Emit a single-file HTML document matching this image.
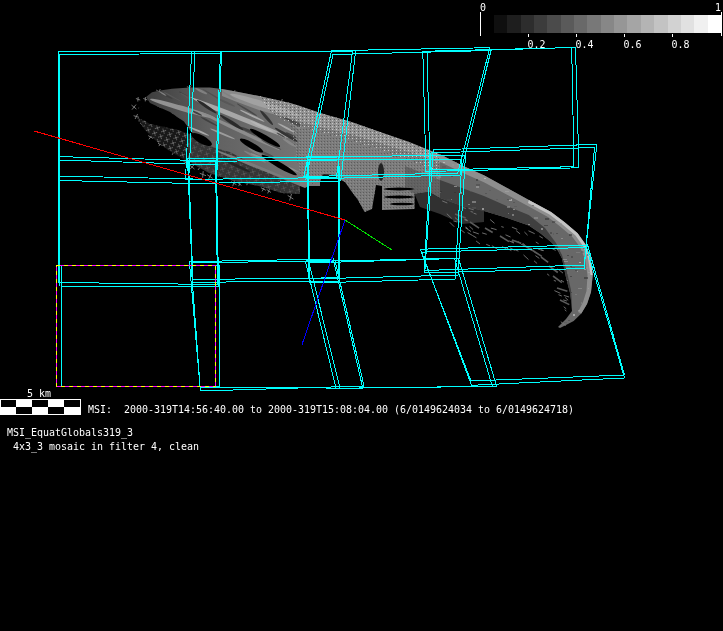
<!DOCTYPE html>
<html><head><meta charset="utf-8"><title>MSI mosaic</title>
<style>html,body{margin:0;padding:0;background:#000;overflow:hidden}svg{display:block}text{font-family:"DejaVu Sans Mono","Liberation Mono",monospace;fill:#fff;font-size:10.5px}</style></head><body>
<svg width="723" height="631" viewBox="0 0 723 631">
<rect width="723" height="631" fill="#000"/>
<defs>
<filter id="gs" x="0" y="0" width="723" height="631" filterUnits="userSpaceOnUse" color-interpolation-filters="sRGB"><feColorMatrix type="saturate" values="0"/></filter>
<pattern id="mesh" width="9" height="8" patternUnits="userSpaceOnUse" patternTransform="rotate(25)">
<path d="M1 1L5 5M5 1L1 5" stroke="#8a8a8a" stroke-width="0.7" fill="none"/>
</pattern>
<pattern id="mesh2" width="7" height="6" patternUnits="userSpaceOnUse" patternTransform="rotate(28)">
<rect width="7" height="6" fill="#181818"/>
<path d="M1 1L5 5M5 1L1 5" stroke="#707070" stroke-width="0.9" fill="none"/>
</pattern>
<pattern id="dots" width="3" height="3" patternUnits="userSpaceOnUse">
<rect width="3" height="3" fill="#777"/><rect x="0" y="0" width="1" height="1" fill="#b8b8b8"/><rect x="2" y="1" width="1" height="1" fill="#555"/>
</pattern>
<pattern id="sparse" width="13" height="11" patternUnits="userSpaceOnUse" patternTransform="rotate(20)">
<path d="M1 2L5 3M8 7L11 8" stroke="#777" stroke-width="0.8" fill="none"/>
</pattern>
<linearGradient id="bodyg" gradientUnits="userSpaceOnUse" x1="145" y1="0" x2="330" y2="0"><stop offset="0" stop-color="#3c3c3c"/><stop offset="0.35" stop-color="#606060"/><stop offset="1" stop-color="#7c7c7c"/></linearGradient>
<pattern id="dd" width="3" height="3" patternUnits="userSpaceOnUse"><rect x="0" y="0" width="1" height="1" fill="#5c5c5c"/><rect x="2" y="1" width="1" height="1" fill="#8c8c8c"/></pattern>
<pattern id="wd" width="4" height="3" patternUnits="userSpaceOnUse"><rect x="0" y="0" width="1" height="1" fill="#c8c8c8"/><rect x="2" y="2" width="1" height="1" fill="#5a5a5a"/></pattern>
</defs>
<path d="M186.9 86.6L192.1 89.0M191.1 85.4L187.9 90.2M156.2 90.0L161.2 93.3M160.3 89.1L157.1 94.2M166.1 91.2L171.4 94.3M170.1 90.1L167.4 95.5M172.6 93.4L178.5 96.4M177.1 91.9L174.1 97.8M180.2 92.4L184.8 96.2M184.6 92.2L180.4 96.4M189.0 92.2L194.8 93.8M192.4 90.1L191.4 96.0M198.0 90.7L201.8 93.2M200.6 89.8L199.2 94.1M205.6 92.1L211.8 94.0M209.3 89.9L208.1 96.3M215.9 93.1L221.0 96.9M219.8 92.1L217.1 97.9M223.9 90.9L228.9 95.0M227.7 89.9L225.1 95.9M231.7 91.3L236.2 93.6M235.0 90.2L232.9 94.7M135.9 98.5L140.2 100.0M138.2 97.0L137.8 101.5M143.3 98.5L147.4 99.9M145.4 97.0L145.3 101.4M151.2 97.5L156.8 100.7M154.8 96.0L153.1 102.2M159.5 99.6L164.5 101.2M163.1 98.0L161.0 102.8M170.8 100.0L176.1 101.7M173.5 98.1L173.5 103.6M176.4 99.0L182.4 101.1M179.4 96.9L179.4 103.3M188.2 100.0L192.4 102.2M190.7 98.8L189.9 103.5M194.4 101.2L199.8 104.6M198.2 99.9L196.0 106.0M202.2 98.2L207.7 101.2M206.6 97.0L203.3 102.3M210.9 97.9L215.8 101.9M215.6 97.7L211.1 102.1M220.8 101.2L226.6 103.4M224.6 99.3L222.9 105.2M228.4 98.3L232.5 100.0M230.8 96.9L230.0 101.3M238.1 101.1L242.4 104.5M242.3 101.0L238.2 104.7M247.5 99.6L252.1 101.3M250.1 98.0L249.5 102.9M252.7 99.6L258.0 103.4M257.0 98.7L253.7 104.3M263.6 101.0L267.6 103.4M267.1 100.4L264.2 104.0M272.0 101.1L277.2 102.9M275.7 99.5L273.5 104.6M278.3 100.8L284.4 103.6M282.3 99.0L280.3 105.4M131.5 105.1L136.4 109.1M136.0 104.6L132.0 109.6M138.4 108.1L142.9 109.3M141.6 106.5L139.7 110.8M147.4 107.2L153.3 110.1M152.1 105.8L148.6 111.4M157.2 106.4L161.9 108.3M160.0 104.9L159.1 109.8M164.5 106.7L169.7 108.4M168.3 105.1L165.9 110.0M172.4 106.6L177.0 110.1M176.1 105.8L173.2 110.8M182.9 107.2L187.9 109.8M185.8 105.7L185.0 111.3M190.2 106.0L193.8 108.5M192.8 105.2L191.3 109.3M198.0 108.3L203.3 110.5M201.6 106.7L199.7 112.1M207.4 108.5L211.5 110.8M210.1 107.4L208.8 111.9M214.4 108.2L219.3 111.0M218.3 107.2L215.4 112.0M225.3 106.9L230.5 109.6M229.0 105.6L226.8 111.0M233.0 107.0L238.1 109.6M237.2 106.0L233.9 110.6M240.9 108.8L247.1 111.2M245.1 106.8L243.0 113.2M251.3 109.1L255.8 110.6M254.0 107.5L253.1 112.2M256.6 106.3L260.5 108.7M259.9 105.6L257.2 109.3M267.7 105.5L272.9 108.7M271.2 104.2L269.5 110.1M276.9 108.8L280.7 111.9M280.0 108.3L277.5 112.5M282.7 109.4L288.7 111.5M286.4 107.3L285.0 113.6M292.1 106.9L296.6 108.8M295.3 105.6L293.3 110.1M133.6 115.7L139.0 117.3M137.6 114.0L135.1 119.0M144.5 117.0L148.8 118.7M146.8 115.6L146.5 120.2M153.0 114.1L157.2 116.1M156.4 113.1L153.8 117.1M161.9 113.6L165.7 116.5M165.1 113.1L162.4 117.0M169.9 113.1L173.7 115.6M172.8 112.3L170.8 116.4M175.4 116.1L180.2 119.5M178.7 114.9L176.9 120.6M186.5 112.8L192.3 115.7M190.3 111.2L188.5 117.4M194.3 116.9L199.1 118.5M197.3 115.3L196.1 120.2M201.7 113.8L206.3 115.1M204.1 112.0L203.9 116.8M209.9 114.0L215.6 116.4M213.7 112.2L211.8 118.2M218.6 114.6L222.8 116.2M220.8 113.2L220.6 117.6M229.3 115.1L233.6 117.3M232.8 114.2L230.0 118.2M235.0 116.0L239.8 118.5M238.9 115.0L236.0 119.6M244.7 114.1L249.4 118.0M248.6 113.4L245.6 118.7M254.6 115.6L260.0 118.1M258.1 114.0L256.5 119.7M260.8 113.3L264.6 115.8M263.5 112.4L261.9 116.6M269.1 112.4L274.2 116.3M273.6 111.8L269.7 116.9M278.3 113.8L282.9 116.1M281.1 112.5L280.1 117.5M287.2 112.9L292.4 117.2M291.7 112.3L287.8 117.8M295.1 116.8L299.8 118.9M297.7 115.3L297.3 120.4M138.4 120.8L143.2 122.3M141.2 119.0L140.4 124.0M145.0 120.7L149.8 122.5M148.2 119.2L146.6 124.0M155.4 122.9L160.4 126.1M159.8 122.2L156.0 126.8M162.6 121.7L169.0 123.9M167.0 119.6L164.6 126.0M172.8 119.7L177.9 123.6M177.2 119.1L173.4 124.3M182.1 123.6L186.3 125.9M185.1 122.6L183.3 126.9M190.3 123.1L195.9 126.3M195.0 122.1L191.2 127.3M198.6 123.6L203.4 124.9M201.0 121.8L201.0 126.7M205.4 120.4L211.0 123.5M209.7 119.1L206.7 124.8M215.1 123.5L220.4 124.9M218.7 121.6L216.8 126.9M224.3 122.0L229.2 125.0M227.4 120.7L226.1 126.3M233.1 121.7L237.3 123.4M236.1 120.4L234.3 124.6M238.6 122.9L244.6 126.0M242.7 121.3L240.5 127.6M248.5 122.7L253.9 125.8M252.7 121.5L249.6 126.9M256.0 120.7L260.1 123.5M259.0 119.8L257.1 124.4M266.4 120.7L270.6 122.4M269.4 119.4L267.7 123.7M275.3 123.0L279.8 125.4M278.5 121.8L276.6 126.6M282.0 120.9L288.2 123.1M286.7 119.1L283.5 124.8M293.3 120.0L297.7 123.2M297.4 119.6L293.6 123.5M152.5 128.0L158.1 131.0M157.1 126.9L153.5 132.2M159.9 128.4L165.7 131.4M163.3 126.7L162.4 133.2M166.0 129.9L171.0 132.0M168.8 128.2L168.2 133.7M175.3 129.4L181.5 131.1M179.3 127.2L177.4 133.3M186.1 127.7L191.6 131.3M191.0 126.9L186.7 132.0M193.1 128.8L197.2 132.2M196.8 128.4L193.5 132.6M201.5 130.0L206.4 131.4M203.9 128.2L204.0 133.2M211.2 128.9L217.4 131.3M214.9 126.9L213.8 133.4M219.5 128.1L223.6 131.4M223.4 127.9L219.7 131.6M228.7 129.5L233.8 133.6M233.1 128.8L229.4 134.2M236.6 127.8L242.1 130.6M240.9 126.5L237.9 131.9M245.8 128.7L249.4 131.5M248.4 128.1L246.7 132.2M253.3 129.0L257.5 131.8M257.1 128.5L253.7 132.3M260.8 130.4L265.3 132.9M263.9 129.2L262.1 134.0M269.2 128.2L273.1 131.1M272.5 127.6L269.9 131.7M276.8 131.1L282.9 134.1M280.5 129.3L279.3 136.0M285.8 128.6L290.8 130.1M288.5 126.8L288.1 132.0M294.3 129.5L299.7 133.1M298.5 128.3L295.6 134.2M148.2 135.6L153.0 138.4M152.3 134.8L148.9 139.3M153.8 136.5L158.4 138.6M156.9 135.2L155.3 140.0M164.4 139.0L170.7 140.8M167.4 136.7L167.8 143.1M172.7 138.7L177.5 141.5M175.6 137.4L174.6 142.8M179.7 138.3L184.9 142.1M184.6 138.0L180.0 142.4M188.1 135.8L192.3 138.1M191.4 134.8L189.1 139.0M199.1 137.7L204.0 141.1M202.9 136.8L200.1 142.0M205.5 135.5L211.4 137.8M209.9 133.9L207.0 139.4M215.1 136.9L219.5 138.6M218.2 135.5L216.5 139.9M224.0 135.9L228.1 138.0M227.0 134.9L225.1 139.0M230.5 136.6L236.1 138.2M233.5 134.5L233.1 140.3M239.7 138.5L244.5 142.1M243.6 137.8L240.5 142.9M246.9 135.7L252.5 139.3M250.9 134.4L248.4 140.6M254.6 137.2L260.1 139.8M258.0 135.6L256.6 141.4M266.0 139.5L270.8 140.9M268.7 137.7L268.2 142.7M273.9 137.8L277.9 140.6M277.4 137.3L274.5 141.2M281.7 136.0L287.9 138.6M286.3 134.3L283.2 140.3M289.3 136.2L295.1 138.6M293.8 134.7L290.6 140.1M158.0 143.3L162.1 145.2M161.3 142.3L158.9 146.1M168.9 144.8L174.2 149.0M173.1 143.9L169.9 149.9M174.3 146.9L180.2 148.6M178.1 144.8L176.4 150.7M184.1 144.6L189.0 146.4M186.5 142.9L186.5 148.1M191.4 144.4L197.8 146.4M196.1 142.4L193.1 148.4M200.2 143.6L205.4 147.3M204.4 142.6L201.3 148.2M208.6 144.3L212.8 147.5M211.8 143.5L209.6 148.3M218.4 146.6L222.5 148.5M221.6 145.6L219.4 149.5M228.4 143.5L232.7 144.8M231.5 142.1L229.6 146.2M234.0 145.7L240.0 148.3M237.7 143.8L236.4 150.2M246.2 145.1L250.4 147.8M249.3 144.1L247.4 148.8M251.7 142.1L256.6 145.9M256.0 141.5L252.2 146.5M263.1 143.0L267.5 145.2M266.7 142.1L263.8 146.1M271.6 144.5L276.1 146.6M274.7 143.2L272.9 147.9M279.6 143.0L284.9 146.5M284.2 142.2L280.3 147.2M287.7 145.4L292.5 147.4M290.7 143.9L289.5 148.9M296.6 143.0L300.7 145.7M299.5 142.0L297.7 146.6M171.2 151.1L175.9 153.8M174.9 150.1L172.2 154.8M180.4 154.0L186.1 155.8M184.4 152.1L182.1 157.6M187.7 152.3L192.1 155.2M190.8 151.3L189.0 156.3M196.3 151.0L200.1 153.9M199.6 150.5L196.9 154.4M204.1 151.5L210.1 154.7M207.9 149.8L206.2 156.4M214.3 153.1L220.7 155.1M218.2 150.8L216.8 157.4M222.9 154.0L229.2 155.8M226.3 151.6L225.7 158.1M228.8 150.6L234.7 153.9M233.8 149.6L229.7 154.9M238.7 154.0L243.8 156.0M242.4 152.5L240.1 157.5M249.5 150.4L254.5 153.4M252.9 149.1L251.2 154.7M255.9 151.2L260.5 153.0M259.0 149.8L257.4 154.4M265.8 151.4L269.9 153.2M268.7 150.3L267.0 154.3M272.5 151.4L276.5 154.1M275.8 150.7L273.2 154.8M280.2 150.6L284.8 153.2M283.8 149.5L281.3 154.3M288.4 150.9L293.9 153.4M291.8 149.2L290.4 155.1M183.5 161.6L188.7 163.4M186.1 159.8L186.1 165.3M192.1 160.6L198.4 162.5M196.1 158.4L194.3 164.7M200.8 160.1L205.2 161.9M203.7 158.8L202.3 163.3M211.4 157.8L216.0 161.0M215.6 157.4L211.8 161.4M216.7 157.4L221.9 161.6M221.1 156.7L217.4 162.3M225.1 161.1L229.3 164.3M228.8 160.6L225.6 164.9M235.9 158.5L241.7 160.7M239.5 156.6L238.1 162.7M245.1 161.5L249.7 163.2M247.9 160.0L246.9 164.7M252.4 159.7L256.8 161.4M255.5 158.4L253.7 162.7M262.2 157.6L267.0 160.8M265.3 156.4L263.8 161.9M270.3 158.1L275.4 160.9M274.2 156.9L271.5 162.1M276.6 159.4L281.8 161.9M280.5 158.1L278.0 163.3M286.4 159.6L290.2 161.9M289.2 158.7L287.3 162.8M293.1 160.7L298.7 163.5M296.6 159.0L295.3 165.1M189.6 165.0L194.5 169.1M194.2 164.6L189.9 169.4M197.0 165.7L203.0 168.8M202.0 164.5L198.0 170.0M206.4 165.2L211.4 169.1M210.0 164.2L207.8 170.1M213.3 168.1L217.1 171.0M216.2 167.4L214.1 171.7M223.3 165.3L227.7 168.8M226.7 164.5L224.4 169.6M229.3 167.8L234.3 169.2M231.9 165.9L231.7 171.1M237.5 168.4L242.3 172.1M241.0 167.5L238.7 173.0M248.5 165.5L253.3 168.4M251.9 164.3L249.8 169.6M257.4 167.0L262.1 170.5M260.7 166.0L258.7 171.4M266.5 167.5L270.9 170.6M269.8 166.6L267.7 171.5M275.0 167.3L279.4 170.3M278.4 166.5L276.0 171.1M280.6 168.2L284.3 170.8M283.3 167.4L281.6 171.6M290.3 168.9L295.3 172.0M293.8 167.7L291.8 173.1M199.8 173.3L206.0 175.7M203.2 171.2L202.6 177.8M207.2 174.7L212.6 178.4M211.3 173.7L208.4 179.5M216.5 172.6L221.7 175.5M220.1 171.2L218.1 176.8M226.3 173.9L231.9 177.6M230.3 172.7L227.9 178.9M236.0 173.0L241.2 175.4M239.2 171.4L238.0 176.9M241.8 176.0L245.7 178.2M245.1 175.3L242.4 178.9M250.0 173.4L255.2 176.2M253.9 172.2L251.2 177.4M261.4 173.7L266.1 175.7M263.9 172.1L263.6 177.3M269.6 176.3L275.5 177.9M273.6 174.3L271.5 180.0M277.7 174.5L283.3 177.2M281.2 172.9L279.8 178.9M284.4 174.0L288.5 175.8M287.4 172.9L285.4 177.0M294.4 176.3L300.1 178.5M298.2 174.5L296.3 180.3M231.0 181.7L236.4 184.7M234.7 180.3L232.7 186.2M237.8 182.6L241.4 185.4M240.5 181.9L238.7 186.1M244.3 180.6L250.4 183.3M247.8 178.6L246.9 185.2M253.3 180.1L258.5 183.2M257.5 179.1L254.3 184.2M264.5 180.6L269.9 183.0M268.6 179.2L265.8 184.3M274.2 183.7L277.9 186.4M277.6 183.4L274.4 186.7M282.7 181.2L287.4 182.7M285.0 179.5L285.1 184.4M290.7 183.0L295.5 186.5M294.8 182.3L291.5 187.2M260.9 187.7L265.9 190.3M264.9 186.6L262.0 191.4M266.6 189.4L270.9 192.5M269.8 188.6L267.7 193.4M278.2 188.8L282.3 191.5M281.4 188.0L279.1 192.3M283.6 190.2L287.3 192.9M286.8 189.7L284.1 193.4M294.3 190.4L299.0 192.6M297.4 189.0L295.9 194.0M287.7 195.4L293.4 199.1M291.5 194.0L289.6 200.5" stroke="#909090" stroke-width="0.8" fill="none"/>
<polygon points="137.0,118.0 150.0,122.0 165.0,126.0 178.0,130.0 190.0,133.0 200.0,140.0 230.0,150.0 262.0,165.0 300.0,180.0 300.0,194.0 282.0,193.0 259.0,186.0 234.0,181.0 209.0,173.0 185.0,160.0 168.0,150.0 155.0,140.0 145.0,130.0" fill="url(#mesh2)" />
<polygon points="186.0,132.0 200.0,140.0 230.0,150.0 262.0,165.0 300.0,180.0 300.0,194.0 282.0,193.0 259.0,186.0 234.0,181.0 209.0,173.0 190.0,162.0" fill="#4a4a4a" opacity="0.6"/>
<polygon points="140.0,107.0 146.0,103.0 156.5,106.0 170.0,112.0 184.0,121.5 190.0,130.0 193.0,135.0 178.0,130.0 165.0,127.0 150.0,124.0 142.0,119.0 136.0,112.0" fill="#000" />
<polygon points="146.0,97.0 152.0,92.3 160.0,90.5 172.0,88.7 190.0,87.5 209.6,87.5 222.0,89.0 234.5,91.2 259.0,96.0 290.0,103.0 300.0,106.0 320.0,113.0 320.0,186.0 300.0,186.0 280.0,178.0 262.0,170.0 245.0,160.0 230.0,152.0 215.0,148.0 200.0,142.0 190.0,130.0 184.0,121.5 170.0,112.0 156.5,106.0 150.0,103.0" fill="url(#bodyg)" />
<ellipse cx="182.5" cy="108.5" rx="33.9" ry="2.5" transform="rotate(16.3 182.5 108.5)" fill="#929292"/>
<ellipse cx="237.5" cy="117.0" rx="56.5" ry="2.5" transform="rotate(21.8 237.5 117.0)" fill="#a8a8a8"/>
<ellipse cx="240.0" cy="131.0" rx="44.3" ry="1.75" transform="rotate(25.4 240.0 131.0)" fill="#8c8c8c"/>
<ellipse cx="265.0" cy="105.0" rx="36.7" ry="3.0" transform="rotate(17.4 265.0 105.0)" fill="#a0a0a0"/>
<ellipse cx="252.5" cy="165.0" rx="40.4" ry="1.5" transform="rotate(21.8 252.5 165.0)" fill="#7a7a7a"/>
<clipPath id="cl"><polygon points="146.0,97.0 152.0,92.3 160.0,90.5 172.0,88.7 190.0,87.5 209.6,87.5 222.0,89.0 234.5,91.2 259.0,96.0 290.0,103.0 300.0,106.0 320.0,113.0 320.0,186.0 300.0,186.0 280.0,178.0 262.0,170.0 245.0,160.0 230.0,152.0 215.0,148.0 200.0,142.0 190.0,130.0 184.0,121.5 170.0,112.0 156.5,106.0 150.0,103.0"/></clipPath>
<g clip-path="url(#cl)">
<ellipse cx="221.9" cy="189.2" rx="11.9" ry="0.8" transform="rotate(29.4 221.9 189.2)" fill="rgb(168,168,168)"/>
<ellipse cx="173.3" cy="179.9" rx="6.8" ry="0.6" transform="rotate(30.9 173.3 179.9)" fill="rgb(180,180,180)"/>
<ellipse cx="223.6" cy="169.7" rx="11.0" ry="0.9" transform="rotate(27.1 223.6 169.7)" fill="rgb(144,144,144)"/>
<ellipse cx="179.7" cy="150.6" rx="8.0" ry="1.1" transform="rotate(29.4 179.7 150.6)" fill="rgb(168,168,168)"/>
<ellipse cx="254.9" cy="156.8" rx="12.5" ry="1.2" transform="rotate(28.5 254.9 156.8)" fill="rgb(128,128,128)"/>
<ellipse cx="266.4" cy="153.8" rx="8.6" ry="1.25" transform="rotate(25.2 266.4 153.8)" fill="rgb(80,80,80)"/>
<ellipse cx="199.0" cy="131.2" rx="11.1" ry="0.95" transform="rotate(23.6 199.0 131.2)" fill="rgb(168,168,168)"/>
<ellipse cx="161.2" cy="175.7" rx="9.2" ry="1.25" transform="rotate(28.5 161.2 175.7)" fill="rgb(88,88,88)"/>
<ellipse cx="213.1" cy="95.4" rx="12.3" ry="0.65" transform="rotate(31.2 213.1 95.4)" fill="rgb(80,80,80)"/>
<ellipse cx="247.0" cy="109.8" rx="11.8" ry="0.85" transform="rotate(31.3 247.0 109.8)" fill="rgb(72,72,72)"/>
<ellipse cx="290.9" cy="135.1" rx="6.1" ry="1.05" transform="rotate(27.0 290.9 135.1)" fill="rgb(64,64,64)"/>
<ellipse cx="289.6" cy="142.8" rx="8.1" ry="1.3" transform="rotate(31.4 289.6 142.8)" fill="rgb(136,136,136)"/>
<ellipse cx="191.1" cy="144.4" rx="13.4" ry="0.85" transform="rotate(29.3 191.1 144.4)" fill="rgb(128,128,128)"/>
<ellipse cx="166.5" cy="117.6" rx="8.0" ry="1.25" transform="rotate(22.1 166.5 117.6)" fill="rgb(168,168,168)"/>
<ellipse cx="259.6" cy="157.3" rx="9.8" ry="1.1" transform="rotate(23.2 259.6 157.3)" fill="rgb(144,144,144)"/>
<ellipse cx="305.8" cy="142.2" rx="6.2" ry="0.9" transform="rotate(30.1 305.8 142.2)" fill="rgb(168,168,168)"/>
<ellipse cx="180.4" cy="180.5" rx="4.7" ry="0.95" transform="rotate(29.6 180.4 180.5)" fill="rgb(136,136,136)"/>
<ellipse cx="252.2" cy="115.8" rx="13.6" ry="0.95" transform="rotate(25.6 252.2 115.8)" fill="rgb(168,168,168)"/>
<ellipse cx="201.6" cy="143.8" rx="5.3" ry="1.15" transform="rotate(30.2 201.6 143.8)" fill="rgb(156,156,156)"/>
<ellipse cx="196.2" cy="162.1" rx="10.9" ry="0.95" transform="rotate(31.9 196.2 162.1)" fill="rgb(88,88,88)"/>
<ellipse cx="285.5" cy="169.1" rx="7.6" ry="0.95" transform="rotate(28.4 285.5 169.1)" fill="rgb(156,156,156)"/>
<ellipse cx="228.1" cy="154.4" rx="10.6" ry="1.2" transform="rotate(25.7 228.1 154.4)" fill="rgb(144,144,144)"/>
<ellipse cx="170.4" cy="174.8" rx="13.1" ry="0.95" transform="rotate(29.8 170.4 174.8)" fill="rgb(88,88,88)"/>
<ellipse cx="214.8" cy="148.8" rx="10.6" ry="1.05" transform="rotate(24.0 214.8 148.8)" fill="rgb(80,80,80)"/>
<ellipse cx="194.9" cy="100.0" rx="5.4" ry="0.85" transform="rotate(24.4 194.9 100.0)" fill="rgb(180,180,180)"/>
<ellipse cx="185.4" cy="180.5" rx="12.0" ry="1.3" transform="rotate(23.7 185.4 180.5)" fill="rgb(128,128,128)"/>
<ellipse cx="172.8" cy="180.0" rx="9.5" ry="0.75" transform="rotate(28.3 172.8 180.0)" fill="rgb(144,144,144)"/>
<ellipse cx="271.1" cy="144.6" rx="11.4" ry="1.0" transform="rotate(26.2 271.1 144.6)" fill="rgb(80,80,80)"/>
<ellipse cx="197.1" cy="113.2" rx="5.4" ry="0.95" transform="rotate(27.0 197.1 113.2)" fill="rgb(64,64,64)"/>
<ellipse cx="300.8" cy="158.5" rx="6.4" ry="1.2" transform="rotate(23.8 300.8 158.5)" fill="rgb(128,128,128)"/>
<ellipse cx="158.8" cy="173.6" rx="8.6" ry="1.2" transform="rotate(27.6 158.8 173.6)" fill="rgb(144,144,144)"/>
<ellipse cx="222.6" cy="133.9" rx="13.6" ry="1.05" transform="rotate(22.9 222.6 133.9)" fill="rgb(156,156,156)"/>
<ellipse cx="163.8" cy="152.8" rx="10.8" ry="1.15" transform="rotate(31.4 163.8 152.8)" fill="rgb(156,156,156)"/>
<ellipse cx="175.7" cy="139.6" rx="11.6" ry="1.1" transform="rotate(23.4 175.7 139.6)" fill="rgb(136,136,136)"/>
<ellipse cx="261.4" cy="126.3" rx="12.7" ry="1.15" transform="rotate(25.8 261.4 126.3)" fill="rgb(180,180,180)"/>
<ellipse cx="244.8" cy="179.4" rx="6.8" ry="1.0" transform="rotate(25.6 244.8 179.4)" fill="rgb(144,144,144)"/>
<ellipse cx="293.3" cy="121.8" rx="12.3" ry="1.3" transform="rotate(26.1 293.3 121.8)" fill="rgb(72,72,72)"/>
<ellipse cx="295.0" cy="124.2" rx="6.0" ry="0.85" transform="rotate(27.2 295.0 124.2)" fill="rgb(80,80,80)"/>
<ellipse cx="209.4" cy="121.7" rx="9.9" ry="0.9" transform="rotate(28.4 209.4 121.7)" fill="rgb(64,64,64)"/>
<ellipse cx="247.4" cy="131.7" rx="9.7" ry="0.6" transform="rotate(25.9 247.4 131.7)" fill="rgb(80,80,80)"/>
<ellipse cx="189.2" cy="182.2" rx="10.1" ry="1.25" transform="rotate(28.5 189.2 182.2)" fill="rgb(72,72,72)"/>
<ellipse cx="256.9" cy="152.8" rx="10.3" ry="1.2" transform="rotate(29.2 256.9 152.8)" fill="rgb(128,128,128)"/>
<ellipse cx="172.4" cy="96.7" rx="10.3" ry="0.65" transform="rotate(28.3 172.4 96.7)" fill="rgb(88,88,88)"/>
<ellipse cx="189.1" cy="97.7" rx="11.7" ry="0.85" transform="rotate(31.0 189.1 97.7)" fill="rgb(64,64,64)"/>
<ellipse cx="290.4" cy="168.3" rx="9.6" ry="0.75" transform="rotate(24.6 290.4 168.3)" fill="rgb(144,144,144)"/>
<ellipse cx="164.1" cy="94.5" rx="9.7" ry="0.95" transform="rotate(27.8 164.1 94.5)" fill="rgb(64,64,64)"/>
<ellipse cx="244.1" cy="173.2" rx="11.8" ry="0.9" transform="rotate(26.2 244.1 173.2)" fill="rgb(168,168,168)"/>
<ellipse cx="160.8" cy="130.8" rx="9.9" ry="0.95" transform="rotate(31.4 160.8 130.8)" fill="rgb(88,88,88)"/>
<ellipse cx="225.6" cy="102.2" rx="10.5" ry="1.05" transform="rotate(24.0 225.6 102.2)" fill="rgb(88,88,88)"/>
<ellipse cx="227.4" cy="94.6" rx="10.7" ry="0.75" transform="rotate(31.8 227.4 94.6)" fill="rgb(80,80,80)"/>
<ellipse cx="175.4" cy="136.9" rx="6.8" ry="1.1" transform="rotate(27.7 175.4 136.9)" fill="rgb(180,180,180)"/>
<ellipse cx="190.2" cy="98.6" rx="11.7" ry="1.1" transform="rotate(29.1 190.2 98.6)" fill="rgb(88,88,88)"/>
<ellipse cx="173.4" cy="153.9" rx="11.1" ry="1.25" transform="rotate(26.6 173.4 153.9)" fill="rgb(144,144,144)"/>
<ellipse cx="162.4" cy="93.4" rx="4.6" ry="0.65" transform="rotate(30.7 162.4 93.4)" fill="rgb(128,128,128)"/>
<ellipse cx="204.7" cy="161.7" rx="5.6" ry="1.05" transform="rotate(30.4 204.7 161.7)" fill="rgb(180,180,180)"/>
<ellipse cx="210.7" cy="185.1" rx="11.3" ry="0.7" transform="rotate(26.8 210.7 185.1)" fill="rgb(88,88,88)"/>
<ellipse cx="286.8" cy="128.2" rx="10.4" ry="0.95" transform="rotate(28.3 286.8 128.2)" fill="rgb(168,168,168)"/>
<ellipse cx="280.4" cy="135.2" rx="6.7" ry="0.8" transform="rotate(29.4 280.4 135.2)" fill="rgb(156,156,156)"/>
<ellipse cx="169.2" cy="188.1" rx="11.0" ry="1.2" transform="rotate(30.2 169.2 188.1)" fill="rgb(156,156,156)"/>
<ellipse cx="270.9" cy="92.3" rx="5.5" ry="0.9" transform="rotate(30.5 270.9 92.3)" fill="rgb(128,128,128)"/>
<ellipse cx="301.7" cy="129.6" rx="10.9" ry="1.15" transform="rotate(28.0 301.7 129.6)" fill="rgb(136,136,136)"/>
<ellipse cx="201.2" cy="91.1" rx="6.6" ry="1.25" transform="rotate(26.0 201.2 91.1)" fill="rgb(128,128,128)"/>
<ellipse cx="278.5" cy="166.7" rx="6.9" ry="0.7" transform="rotate(23.0 278.5 166.7)" fill="rgb(128,128,128)"/>
<ellipse cx="314.3" cy="170.0" rx="9.5" ry="0.85" transform="rotate(29.8 314.3 170.0)" fill="rgb(180,180,180)"/>
<ellipse cx="174.6" cy="146.6" rx="12.0" ry="0.8" transform="rotate(23.9 174.6 146.6)" fill="rgb(136,136,136)"/>
<ellipse cx="168.7" cy="132.2" rx="11.1" ry="1.15" transform="rotate(31.2 168.7 132.2)" fill="rgb(128,128,128)"/>
<ellipse cx="280.9" cy="135.1" rx="4.9" ry="0.75" transform="rotate(30.3 280.9 135.1)" fill="rgb(80,80,80)"/>
<ellipse cx="254.2" cy="180.9" rx="12.9" ry="0.95" transform="rotate(27.3 254.2 180.9)" fill="rgb(180,180,180)"/>
<ellipse cx="186.6" cy="111.1" rx="4.9" ry="0.85" transform="rotate(30.5 186.6 111.1)" fill="rgb(144,144,144)"/>
<ellipse cx="248.7" cy="130.7" rx="9.2" ry="1.25" transform="rotate(23.8 248.7 130.7)" fill="rgb(64,64,64)"/>
</g>
<ellipse cx="206.7" cy="106.7" rx="12.0" ry="1.5" transform="rotate(33.6 206.7 106.7)" fill="#2a2a2a"/>
<ellipse cx="231.7" cy="122.5" rx="13.9" ry="1.75" transform="rotate(32.8 231.7 122.5)" fill="#2a2a2a"/>
<ellipse cx="266.5" cy="117.5" rx="9.9" ry="1.5" transform="rotate(49.1 266.5 117.5)" fill="#333"/>
<ellipse cx="286.5" cy="135.0" rx="13.5" ry="1.5" transform="rotate(31.3 286.5 135.0)" fill="#333"/>
<ellipse cx="201.7" cy="139.5" rx="11.4" ry="4.0" transform="rotate(28.8 201.7 139.5)" fill="#000"/>
<ellipse cx="265.0" cy="137.8" rx="17.4" ry="2.75" transform="rotate(30.5 265.0 137.8)" fill="#000"/>
<ellipse cx="251.5" cy="145.5" rx="13.2" ry="3.0" transform="rotate(29.5 251.5 145.5)" fill="#000"/>
<ellipse cx="279.2" cy="165.0" rx="20.2" ry="2.75" transform="rotate(29.7 279.2 165.0)" fill="#000"/>
<ellipse cx="237.5" cy="166.0" rx="13.9" ry="1.5" transform="rotate(25.6 237.5 166.0)" fill="#222"/>
<polygon points="290.0,103.0 320.0,113.0 350.0,121.5 380.0,132.0 409.0,142.0 440.0,154.4 462.0,165.5 462.0,204.0 455.0,200.0 440.0,198.0 429.0,192.0 414.5,194.0 414.5,209.0 382.0,210.0 382.0,186.0 376.0,185.0 372.0,209.0 364.7,212.0 358.0,200.0 352.0,192.0 345.0,182.0 337.0,178.0 322.0,176.0 320.0,182.0 312.0,184.0 305.0,188.0 300.0,186.0 300.0,106.0" fill="#7c7c7c" />
<polygon points="222.0,89.0 234.5,91.2 259.0,96.0 290.0,103.0 320.0,113.0 350.0,121.5 380.0,132.0 409.0,142.0 440.0,154.4 462.0,165.5 462.0,172.0 440.0,163.0 409.0,152.0 380.0,143.0 350.0,134.0 320.0,127.0 290.0,119.0 259.0,110.0 234.5,101.0 222.0,96.0" fill="#a2a2a2" opacity="0.6"/>
<polygon points="259.0,96.0 290.0,103.0 320.0,113.0 350.0,121.5 380.0,132.0 409.0,142.0 440.0,154.4 462.0,165.5 484.4,175.5 484.0,190.0 462.0,182.0 440.0,172.0 409.0,160.0 380.0,150.0 350.0,140.0 320.0,132.0 290.0,124.0 270.0,112.0" fill="url(#wd)" />
<polygon points="290.0,124.0 320.0,132.0 350.0,140.0 380.0,150.0 409.0,160.0 440.0,172.0 440.0,198.0 429.0,192.0 414.5,194.0 414.5,209.0 382.0,210.0 382.0,186.0 376.0,185.0 372.0,209.0 364.7,212.0 358.0,200.0 352.0,192.0 345.0,182.0 337.0,178.0 322.0,176.0 320.0,182.0 312.0,184.0 300.0,175.0" fill="url(#dd)" />
<polygon points="405.0,166.0 440.0,180.0 462.0,188.0 462.0,206.0 440.0,198.0 429.0,192.0 414.5,194.0 405.0,188.0" fill="#505050" opacity="0.6"/>
<ellipse cx="399.0" cy="189.0" rx="15.0" ry="1.5" transform="rotate(0.0 399.0 189.0)" fill="#000"/>
<ellipse cx="399.0" cy="197.0" rx="15.0" ry="1.5" transform="rotate(0.0 399.0 197.0)" fill="#000"/>
<ellipse cx="402.0" cy="204.0" rx="12.0" ry="1.25" transform="rotate(0.0 402.0 204.0)" fill="#000"/>
<ellipse cx="329.5" cy="176.0" rx="7.6" ry="1.5" transform="rotate(7.6 329.5 176.0)" fill="#111"/>
<ellipse cx="381" cy="172" rx="3" ry="9" transform="rotate(0 381 172)" fill="#222"/>
<polygon points="414.5,194.0 429.0,192.0 440.0,198.0 462.0,206.0 484.0,211.0 484.0,222.0 462.0,224.0 440.0,214.0 420.0,207.0" fill="#303030" />
<polygon points="440.0,154.4 462.0,165.5 484.4,175.5 506.6,187.7 528.8,200.0 551.0,212.0 564.3,222.0 577.6,233.2 585.4,244.3 590.5,257.0 592.7,275.0 591.0,292.0 587.0,304.0 581.3,313.6 573.7,321.0 566.0,325.0 560.0,328.0 558.0,327.0 566.0,319.0 572.0,311.0 571.5,304.0 570.0,292.7 566.0,277.5 562.0,258.5 556.0,247.0 551.0,242.0 540.0,233.0 528.8,225.4 506.6,217.7 484.0,211.0 462.0,206.0 440.0,198.0" fill="#686868" />
<polygon points="440.0,180.0 462.0,188.0 484.0,196.0 506.6,206.0 528.8,215.0 545.0,228.0 556.0,243.0 562.0,255.0 567.0,272.0 571.0,290.0 572.0,304.0 572.0,311.0 571.5,304.0 570.0,292.7 566.0,277.5 562.0,258.5 556.0,247.0 551.0,242.0 540.0,233.0 528.8,225.4 506.6,217.7 484.0,211.0 462.0,206.0 440.0,198.0" fill="#404040" />
<polygon points="440.0,154.4 462.0,165.5 484.4,175.5 506.6,187.7 528.8,200.0 551.0,212.0 564.3,222.0 577.6,233.2 585.4,244.3 590.5,257.0 592.7,275.0 591.0,292.0 587.0,304.0 581.3,313.6 578.0,312.0 583.0,302.0 586.5,291.0 587.5,275.0 585.0,259.0 580.0,247.0 572.0,236.5 559.5,226.0 548.0,217.0 528.8,206.5 506.6,194.5 484.4,182.5 462.0,172.5 440.0,162.0" fill="#8e8e8e" />
<polygon points="528.8,200.0 551.0,212.0 564.3,222.0 577.6,233.2 585.4,244.3 590.5,257.0 592.7,275.0 590.5,275.0 588.0,258.0 583.0,246.0 575.5,235.5 562.5,224.5 549.5,214.5 528.0,203.0" fill="#c4c4c4" />
<clipPath id="cl2"><polygon points="409.0,142.0 440.0,154.4 462.0,165.5 484.4,175.5 506.6,187.7 528.8,200.0 551.0,212.0 564.3,222.0 577.6,233.2 585.4,244.3 590.5,257.0 592.7,275.0 591.0,292.0 587.0,304.0 581.3,313.6 573.7,321.0 566.0,325.0 560.0,328.0 558.0,327.0 566.0,319.0 572.0,311.0 571.5,304.0 570.0,292.7 566.0,277.5 562.0,258.5 556.0,247.0 551.0,242.0 540.0,233.0 528.8,225.4 506.6,217.7 484.0,211.0 462.0,206.0 440.0,198.0"/></clipPath>
<g clip-path="url(#cl2)" shape-rendering="crispEdges">
<rect x="415" y="147" width="3" height="2" fill="rgb(136,136,136)" opacity="0.55"/>
<rect x="586" y="267" width="2" height="2" fill="rgb(152,152,152)" opacity="0.55"/>
<rect x="550" y="232" width="2" height="2" fill="rgb(60,60,60)" opacity="0.55"/>
<rect x="457" y="164" width="3" height="1" fill="rgb(168,168,168)" opacity="0.55"/>
<rect x="578" y="310" width="2" height="1" fill="rgb(168,168,168)" opacity="0.55"/>
<rect x="453" y="162" width="2" height="2" fill="rgb(136,136,136)" opacity="0.55"/>
<rect x="439" y="192" width="2" height="1" fill="rgb(112,112,112)" opacity="0.55"/>
<rect x="580" y="246" width="1" height="2" fill="rgb(112,112,112)" opacity="0.55"/>
<rect x="489" y="190" width="2" height="1" fill="rgb(88,88,88)" opacity="0.55"/>
<rect x="528" y="224" width="2" height="1" fill="rgb(192,192,192)" opacity="0.55"/>
<rect x="485" y="193" width="2" height="1" fill="rgb(72,72,72)" opacity="0.55"/>
<rect x="442" y="166" width="4" height="2" fill="rgb(88,88,88)" opacity="0.55"/>
<rect x="545" y="218" width="4" height="2" fill="rgb(48,48,48)" opacity="0.55"/>
<rect x="569" y="234" width="3" height="2" fill="rgb(48,48,48)" opacity="0.55"/>
<rect x="578" y="288" width="4" height="1" fill="rgb(152,152,152)" opacity="0.55"/>
<rect x="544" y="225" width="4" height="1" fill="rgb(48,48,48)" opacity="0.55"/>
<rect x="451" y="175" width="2" height="2" fill="rgb(60,60,60)" opacity="0.55"/>
<rect x="564" y="261" width="4" height="1" fill="rgb(168,168,168)" opacity="0.55"/>
<rect x="570" y="276" width="2" height="1" fill="rgb(48,48,48)" opacity="0.55"/>
<rect x="513" y="202" width="2" height="1" fill="rgb(72,72,72)" opacity="0.55"/>
<rect x="570" y="266" width="2" height="1" fill="rgb(48,48,48)" opacity="0.55"/>
<rect x="588" y="288" width="1" height="1" fill="rgb(168,168,168)" opacity="0.55"/>
<rect x="580" y="258" width="1" height="1" fill="rgb(112,112,112)" opacity="0.55"/>
<rect x="463" y="198" width="1" height="1" fill="rgb(72,72,72)" opacity="0.55"/>
<rect x="505" y="191" width="4" height="1" fill="rgb(168,168,168)" opacity="0.55"/>
<rect x="573" y="314" width="2" height="2" fill="rgb(216,216,216)" opacity="0.55"/>
<rect x="541" y="228" width="2" height="2" fill="rgb(192,192,192)" opacity="0.55"/>
<rect x="496" y="199" width="2" height="1" fill="rgb(88,88,88)" opacity="0.55"/>
<rect x="470" y="191" width="2" height="1" fill="rgb(88,88,88)" opacity="0.55"/>
<rect x="472" y="207" width="4" height="2" fill="rgb(88,88,88)" opacity="0.55"/>
<rect x="561" y="238" width="2" height="1" fill="rgb(168,168,168)" opacity="0.55"/>
<rect x="567" y="272" width="2" height="2" fill="rgb(112,112,112)" opacity="0.55"/>
<rect x="558" y="223" width="4" height="1" fill="rgb(152,152,152)" opacity="0.55"/>
<rect x="564" y="322" width="3" height="1" fill="rgb(88,88,88)" opacity="0.55"/>
<rect x="509" y="199" width="3" height="2" fill="rgb(216,216,216)" opacity="0.55"/>
<rect x="482" y="208" width="2" height="2" fill="rgb(216,216,216)" opacity="0.55"/>
<rect x="584" y="269" width="2" height="1" fill="rgb(192,192,192)" opacity="0.55"/>
<rect x="438" y="176" width="3" height="2" fill="rgb(152,152,152)" opacity="0.55"/>
<rect x="575" y="271" width="3" height="1" fill="rgb(192,192,192)" opacity="0.55"/>
<rect x="454" y="192" width="2" height="1" fill="rgb(48,48,48)" opacity="0.55"/>
<rect x="568" y="320" width="2" height="1" fill="rgb(60,60,60)" opacity="0.55"/>
<rect x="493" y="213" width="2" height="2" fill="rgb(48,48,48)" opacity="0.55"/>
<rect x="581" y="302" width="1" height="2" fill="rgb(136,136,136)" opacity="0.55"/>
<rect x="451" y="199" width="1" height="1" fill="rgb(168,168,168)" opacity="0.55"/>
<rect x="426" y="172" width="2" height="1" fill="rgb(152,152,152)" opacity="0.55"/>
<rect x="508" y="213" width="1" height="1" fill="rgb(152,152,152)" opacity="0.55"/>
<rect x="512" y="214" width="2" height="2" fill="rgb(168,168,168)" opacity="0.55"/>
<rect x="532" y="205" width="2" height="1" fill="rgb(72,72,72)" opacity="0.55"/>
<rect x="576" y="252" width="4" height="1" fill="rgb(136,136,136)" opacity="0.55"/>
<rect x="567" y="280" width="1" height="1" fill="rgb(152,152,152)" opacity="0.55"/>
<rect x="513" y="209" width="2" height="1" fill="rgb(192,192,192)" opacity="0.55"/>
<rect x="452" y="164" width="2" height="2" fill="rgb(152,152,152)" opacity="0.55"/>
<rect x="443" y="162" width="2" height="1" fill="rgb(216,216,216)" opacity="0.55"/>
<rect x="583" y="247" width="4" height="2" fill="rgb(88,88,88)" opacity="0.55"/>
<rect x="567" y="255" width="2" height="1" fill="rgb(48,48,48)" opacity="0.55"/>
<rect x="507" y="206" width="3" height="2" fill="rgb(152,152,152)" opacity="0.55"/>
<rect x="563" y="259" width="4" height="1" fill="rgb(168,168,168)" opacity="0.55"/>
<rect x="553" y="233" width="1" height="2" fill="rgb(88,88,88)" opacity="0.55"/>
<rect x="442" y="171" width="4" height="2" fill="rgb(88,88,88)" opacity="0.55"/>
<rect x="447" y="199" width="3" height="2" fill="rgb(72,72,72)" opacity="0.55"/>
<rect x="454" y="186" width="3" height="1" fill="rgb(192,192,192)" opacity="0.55"/>
<rect x="476" y="179" width="2" height="2" fill="rgb(48,48,48)" opacity="0.55"/>
<rect x="579" y="262" width="2" height="1" fill="rgb(216,216,216)" opacity="0.55"/>
<rect x="575" y="270" width="2" height="2" fill="rgb(60,60,60)" opacity="0.55"/>
<rect x="476" y="184" width="4" height="2" fill="rgb(72,72,72)" opacity="0.55"/>
<rect x="421" y="160" width="1" height="1" fill="rgb(152,152,152)" opacity="0.55"/>
<rect x="555" y="221" width="1" height="1" fill="rgb(112,112,112)" opacity="0.55"/>
<rect x="514" y="206" width="3" height="1" fill="rgb(88,88,88)" opacity="0.55"/>
<rect x="487" y="210" width="2" height="2" fill="rgb(72,72,72)" opacity="0.55"/>
<rect x="476" y="186" width="3" height="2" fill="rgb(168,168,168)" opacity="0.55"/>
<rect x="431" y="174" width="4" height="1" fill="rgb(88,88,88)" opacity="0.55"/>
<rect x="584" y="259" width="1" height="2" fill="rgb(192,192,192)" opacity="0.55"/>
<rect x="584" y="277" width="4" height="2" fill="rgb(48,48,48)" opacity="0.55"/>
<rect x="580" y="268" width="2" height="1" fill="rgb(112,112,112)" opacity="0.55"/>
<rect x="556" y="233" width="2" height="1" fill="rgb(60,60,60)" opacity="0.55"/>
<rect x="571" y="267" width="4" height="2" fill="rgb(72,72,72)" opacity="0.55"/>
<rect x="571" y="292" width="1" height="1" fill="rgb(48,48,48)" opacity="0.55"/>
<rect x="588" y="272" width="3" height="1" fill="rgb(168,168,168)" opacity="0.55"/>
<rect x="571" y="256" width="2" height="2" fill="rgb(60,60,60)" opacity="0.55"/>
<rect x="507" y="199" width="4" height="1" fill="rgb(72,72,72)" opacity="0.55"/>
<rect x="468" y="204" width="2" height="1" fill="rgb(168,168,168)" opacity="0.55"/>
<rect x="460" y="192" width="2" height="2" fill="rgb(192,192,192)" opacity="0.55"/>
<rect x="527" y="209" width="2" height="1" fill="rgb(112,112,112)" opacity="0.55"/>
<rect x="472" y="201" width="4" height="2" fill="rgb(168,168,168)" opacity="0.55"/>
<rect x="575" y="294" width="2" height="1" fill="rgb(136,136,136)" opacity="0.55"/>
<rect x="534" y="217" width="4" height="2" fill="rgb(152,152,152)" opacity="0.55"/>
<rect x="581" y="251" width="2" height="2" fill="rgb(72,72,72)" opacity="0.55"/>
<rect x="580" y="251" width="4" height="2" fill="rgb(112,112,112)" opacity="0.55"/>
<rect x="552" y="221" width="3" height="2" fill="rgb(60,60,60)" opacity="0.55"/>
<rect x="440" y="191" width="2" height="1" fill="rgb(48,48,48)" opacity="0.55"/>
<rect x="484" y="178" width="2" height="1" fill="rgb(216,216,216)" opacity="0.55"/>
<rect x="587" y="254" width="1" height="2" fill="rgb(60,60,60)" opacity="0.55"/>
</g>
<path d="M552.3 248.8l3.4 1.6M516.2 230.7l3.9 3.2M514.1 249.3l4.3 1.8M523.5 254.9l5.0 4.7M511.9 227.1l5.4 2.3M560.8 321.7l4.9 3.9M509.9 247.8l4.9 2.6M490.9 228.1l5.7 1.6M529.7 247.8l2.8 1.4M442.2 200.9l5.1 2.1M486.2 244.3l3.8 1.6M557.6 268.8l5.4 4.3M506.4 247.9l5.0 2.8M491.9 245.7l5.5 3.5M446.8 213.7l4.9 4.7M468.5 208.3l5.3 1.5M539.4 236.1l3.5 2.1M490.1 219.5l4.4 3.8M524.4 232.0l3.2 3.2M535.4 255.6l3.9 2.8M502.0 246.6l4.2 2.1M556.2 248.4l1.7 1.6M563.7 306.7l2.5 2.1M554.6 247.4l4.2 2.6M541.0 249.7l2.8 1.0M554.4 290.6l6.0 2.7M533.6 251.3l3.1 2.2M509.1 240.9l4.9 2.1M518.3 241.5l3.5 3.2M472.8 235.7l3.6 2.1M563.2 299.9l3.7 1.1M472.9 231.9l5.9 2.0M553.8 280.4l2.2 0.8M565.2 297.5l3.0 2.9M462.0 207.2l3.8 1.3M469.6 226.4l3.5 3.2M523.2 243.5l2.1 2.1M558.5 294.7l3.3 1.3M511.4 241.3l2.5 1.0M465.3 227.7l5.7 3.8M465.7 226.9l2.2 1.9M454.9 217.5l4.9 4.1M460.3 229.4l4.4 3.4M547.1 273.9l2.2 1.7M501.3 226.6l2.4 0.7M534.0 260.8l3.1 2.7M535.8 242.0l2.8 1.7M528.5 230.8l6.2 2.9M464.9 219.1l2.6 1.2M476.1 241.0l3.9 3.0M561.0 280.2l3.0 1.9M464.4 219.6l3.3 1.2M453.4 220.9l3.8 1.1M537.9 249.0l5.1 1.6M473.5 213.1l3.0 1.1M482.1 232.9l4.6 1.4M470.6 211.5l2.4 0.7M449.8 222.3l4.4 4.4M467.6 232.6l5.1 3.0M564.7 309.7l1.7 1.4M563.8 295.4l5.3 1.6M505.5 234.8l5.0 2.2" stroke="#777" stroke-width="0.9" fill="none"/>
<path d="M500 236l9.0 5.6M512 240l9.2 3.3M522 244l9.9 6.2M532 250l9.8 6.4M541 257l7.2 5.4M549 266l8.8 6.5M553 276l8.9 6.7M557 288l10.4 3.2M560 300l9.3 4.6M470 222l9.1 6.1M485 228l7.7 4.5M455 214l10.7 3.9" stroke="#5a5a5a" stroke-width="1.6" fill="none"/>
<g fill="none" stroke="#0ff" stroke-width="1" shape-rendering="crispEdges">
<polygon points="58.5,51.5 220.5,51.5 215.5,179.5 58.5,176"/>
<polygon points="59.5,55 221.5,53 216.5,184 59.5,180.5"/>
<polygon points="191.6,51.5 352.5,51 336.5,177.5 185.5,179.5"/>
<polygon points="195,52 355.6,51 340.7,181 188.5,183.5"/>
<polygon points="331.5,50.7 489.8,47.7 457.8,173 303.8,176.6"/>
<polygon points="333,54.5 491,50.5 460,175 306,179"/>
<polygon points="422.8,51.3 575.5,47.5 579,167.8 426,171.5"/>
<polygon points="427,52 571.7,47.5 574,166.7 430,170"/>
<polygon points="58.5,156.6 215.5,161 217.5,284.5 59,282.5"/>
<polygon points="59.5,160 216.5,165 218.5,287 60,286"/>
<polygon points="187.5,158.5 338.2,157 338.7,277.8 192.5,279.5"/>
<polygon points="188.5,161.5 339,160 339.3,281 193,282.3"/>
<polygon points="307,156.6 465.5,155.5 458,275 309,279"/>
<polygon points="308,160 462,159.5 455,279 309.8,283"/>
<polygon points="433.2,150 596.8,144.3 584.2,265 424.9,270.5"/>
<polygon points="431,153 594.5,147.5 584.2,268.5 424,273"/>
<polygon points="61.6,265.5 219.8,265.5 219.8,386 61.6,386"/>
<polygon points="189.4,261.6 333.2,259 362.8,388.3 200,387"/>
<polygon points="191,263 335,260.5 364,386 200.4,391"/>
<polygon points="305.5,261.6 454.5,258.4 492.3,386.3 336,388.3"/>
<polygon points="309,263 458.5,258.4 496.6,386.3 340,388.3"/>
<polygon points="420.2,249.2 587.6,245 624.5,375 471,381"/>
<polygon points="421.6,252.1 586.5,247.5 624.5,378 471.5,385.3"/>
</g>
<g fill="none" stroke-width="1" shape-rendering="crispEdges">
<path d="M34 131L345 220" stroke="#f00"/>
<path d="M345 220L392 250" stroke="#00e000"/>
<path d="M345 220L302 344.5" stroke="#00f"/>
</g>
<g fill="none" stroke-width="1" shape-rendering="crispEdges">
<rect x="56.5" y="265.5" width="159" height="121" stroke="#f0f"/>
<rect x="56.5" y="265.5" width="159" height="121" stroke="#ff0" stroke-dasharray="4 4" stroke-dashoffset="1"/>
</g>
<rect x="480.50" y="15" width="13.66" height="18" fill="rgb(0,0,0)" shape-rendering="crispEdges"/>
<rect x="493.86" y="15" width="13.66" height="18" fill="rgb(15,15,15)" shape-rendering="crispEdges"/>
<rect x="507.22" y="15" width="13.66" height="18" fill="rgb(30,30,30)" shape-rendering="crispEdges"/>
<rect x="520.58" y="15" width="13.66" height="18" fill="rgb(45,45,45)" shape-rendering="crispEdges"/>
<rect x="533.94" y="15" width="13.66" height="18" fill="rgb(60,60,60)" shape-rendering="crispEdges"/>
<rect x="547.31" y="15" width="13.66" height="18" fill="rgb(75,75,75)" shape-rendering="crispEdges"/>
<rect x="560.67" y="15" width="13.66" height="18" fill="rgb(90,90,90)" shape-rendering="crispEdges"/>
<rect x="574.03" y="15" width="13.66" height="18" fill="rgb(105,105,105)" shape-rendering="crispEdges"/>
<rect x="587.39" y="15" width="13.66" height="18" fill="rgb(120,120,120)" shape-rendering="crispEdges"/>
<rect x="600.75" y="15" width="13.66" height="18" fill="rgb(135,135,135)" shape-rendering="crispEdges"/>
<rect x="614.11" y="15" width="13.66" height="18" fill="rgb(150,150,150)" shape-rendering="crispEdges"/>
<rect x="627.47" y="15" width="13.66" height="18" fill="rgb(165,165,165)" shape-rendering="crispEdges"/>
<rect x="640.83" y="15" width="13.66" height="18" fill="rgb(180,180,180)" shape-rendering="crispEdges"/>
<rect x="654.19" y="15" width="13.66" height="18" fill="rgb(195,195,195)" shape-rendering="crispEdges"/>
<rect x="667.56" y="15" width="13.66" height="18" fill="rgb(210,210,210)" shape-rendering="crispEdges"/>
<rect x="680.92" y="15" width="13.66" height="18" fill="rgb(225,225,225)" shape-rendering="crispEdges"/>
<rect x="694.28" y="15" width="13.66" height="18" fill="rgb(240,240,240)" shape-rendering="crispEdges"/>
<rect x="707.64" y="15" width="13.66" height="18" fill="rgb(255,255,255)" shape-rendering="crispEdges"/>
<g stroke="#fff" stroke-width="1" shape-rendering="crispEdges" fill="none">
<path d="M480.5 12V36M721.5 12V36M528.5 34V37M576.5 34V37M624.5 34V37M672.5 34V37"/>
</g>
<g filter="url(#gs)">
<text x="480" y="10.5" textLength="6" lengthAdjust="spacingAndGlyphs" xml:space="preserve">0</text>
<text x="715" y="10.5" textLength="6" lengthAdjust="spacingAndGlyphs" xml:space="preserve">1</text>
<text x="527.5" y="47.5" textLength="18" lengthAdjust="spacingAndGlyphs" xml:space="preserve">0.2</text>
<text x="575.5" y="47.5" textLength="18" lengthAdjust="spacingAndGlyphs" xml:space="preserve">0.4</text>
<text x="623.5" y="47.5" textLength="18" lengthAdjust="spacingAndGlyphs" xml:space="preserve">0.6</text>
<text x="671.5" y="47.5" textLength="18" lengthAdjust="spacingAndGlyphs" xml:space="preserve">0.8</text>
</g>
<g shape-rendering="crispEdges">
<rect x="0" y="399" width="81" height="16" fill="#fff"/>
<rect x="1" y="400" width="15" height="7" fill="#000"/>
<rect x="16" y="407" width="16" height="7" fill="#000"/>
<rect x="32" y="400" width="16" height="7" fill="#000"/>
<rect x="48" y="407" width="16" height="7" fill="#000"/>
<rect x="64" y="400" width="16" height="7" fill="#000"/>
</g>
<g filter="url(#gs)">
<text x="27" y="396.5" textLength="24" lengthAdjust="spacingAndGlyphs" xml:space="preserve">5 km</text>
<text x="88" y="412.5" textLength="486" lengthAdjust="spacingAndGlyphs" xml:space="preserve">MSI:  2000-319T14:56:40.00 to 2000-319T15:08:04.00 (6/0149624034 to 6/0149624718)</text>
<text x="7" y="435.5" textLength="126" lengthAdjust="spacingAndGlyphs" xml:space="preserve">MSI_EquatGlobals319_3</text>
<text x="7" y="449.5" textLength="192" lengthAdjust="spacingAndGlyphs" xml:space="preserve"> 4x3_3 mosaic in filter 4, clean</text>
</g>
</svg>
</body></html>
